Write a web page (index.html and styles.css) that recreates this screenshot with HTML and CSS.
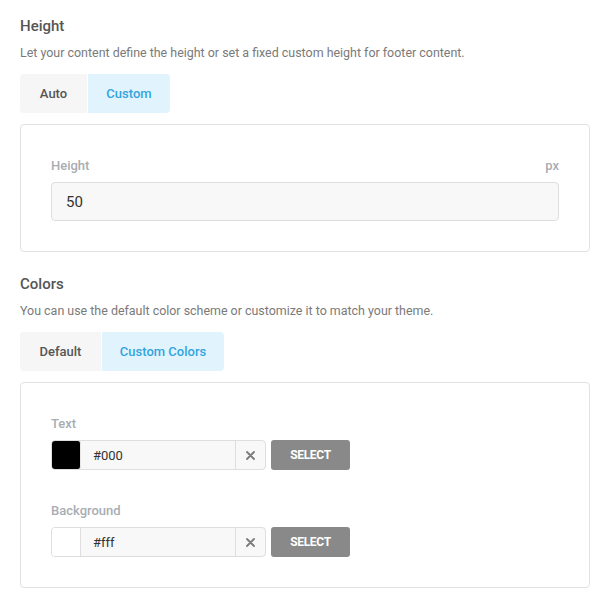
FILE: index.html
```html
<!DOCTYPE html>
<html>
<head>
<meta charset="utf-8">
<link rel="stylesheet" href="styles.css">
</head>
<body>
<div class="page">
  <section class="section">
    <h2 class="title">Height</h2>
    <p class="desc">Let your content define the height or set a fixed custom height for footer content.</p>
    <div class="tabs">
      <div class="tab tab-auto">Auto</div>
      <div class="tab tab-active tab-custom">Custom</div>
    </div>
    <div class="panel">
      <div class="field-head">
        <span class="label">Height</span>
        <span class="label unit">px</span>
      </div>
      <div class="text-input">50</div>
    </div>
  </section>

  <section class="section section-colors">
    <h2 class="title">Colors</h2>
    <p class="desc">You can use the default color scheme or customize it to match your theme.</p>
    <div class="tabs">
      <div class="tab tab-default">Default</div>
      <div class="tab tab-active tab-customcolors">Custom Colors</div>
    </div>
    <div class="panel">
      <div class="color-field">
        <div class="label">Text</div>
        <div class="color-row">
          <div class="color-group">
            <div class="swatch swatch-black"></div>
            <div class="hex">#000</div>
            <div class="clear">
              <svg width="9" height="9" viewBox="0 0 9 9"><path d="M1 1L8 8M8 1L1 8" stroke="#7b7b7b" stroke-width="1.8" stroke-linecap="round"/></svg>
            </div>
          </div>
          <div class="select-btn">SELECT</div>
        </div>
      </div>
      <div class="color-field">
        <div class="label">Background</div>
        <div class="color-row">
          <div class="color-group">
            <div class="swatch swatch-white"></div>
            <div class="hex">#fff</div>
            <div class="clear">
              <svg width="9" height="9" viewBox="0 0 9 9"><path d="M1 1L8 8M8 1L1 8" stroke="#7b7b7b" stroke-width="1.8" stroke-linecap="round"/></svg>
            </div>
          </div>
          <div class="select-btn">SELECT</div>
        </div>
      </div>
    </div>
  </section>
</div>
</body>
</html>
```

FILE: styles.css
```css
html, body {
  margin: 0;
  padding: 0;
  background: #ffffff;
}
body {
  font-family: Roboto, "Liberation Sans", Arial, sans-serif;
  color: #555;
}
.page {
  width: 570px;
  padding: 16px 0 0 20px;
}
.section-colors {
  margin-top: 22px;
}
.title {
  margin: 0;
  font-size: 15px;
  line-height: 20px;
  font-weight: 500;
  color: #555;
}
.desc {
  margin: 8px 0 0;
  font-size: 12.45px;
  line-height: 18px;
  color: #7a7a7a;
}
.tabs {
  display: flex;
  margin-top: 12px;
  height: 39px;
}
.tab {
  display: flex;
  align-items: center;
  justify-content: center;
  font-size: 13px;
  font-weight: 500;
  color: #555;
  background: #f6f6f6;
}
.tab:first-child {
  border-radius: 4px 0 0 4px;
}
.tab:last-child {
  border-radius: 0 4px 4px 0;
  border-left: 1px solid #fff;
}
.tab-active {
  background: #e1f4fd;
  color: #33a4de;
}
.tab-auto { width: 67px; }
.tab-custom { width: 82px; }
.tab-default { width: 81px; }
.tab-customcolors { width: 122px; }
.panel {
  margin-top: 11px;
  border: 1px solid #e2e2e2;
  border-radius: 4px;
  padding: 33px 30px 30px;
}
.field-head {
  display: flex;
  justify-content: space-between;
}
.label {
  font-size: 13px;
  line-height: 16px;
  font-weight: 500;
  color: #a8adb3;
}
.text-input {
  margin-top: 8px;
  height: 37px;
  border: 1px solid #dedede;
  border-radius: 4px;
  background: #f8f8f8;
  padding-left: 14px;
  display: flex;
  align-items: center;
  font-size: 15px;
  color: #333;
}
.color-field + .color-field {
  margin-top: 33px;
}
.color-row {
  display: flex;
  margin-top: 8px;
  height: 30px;
  gap: 5px;
}
.color-group {
  display: flex;
  width: 213px;
  height: 28px;
  border: 1px solid #dedede;
  border-radius: 4px;
  background: #f8f8f8;
}
.swatch {
  width: 28px;
  height: 28px;
  border-right: 1px solid #dedede;
  border-radius: 3px 0 0 3px;
  flex: none;
}
.swatch-black {
  background: #000;
  border-radius: 3px;
  border-right-color: #e6e6e6;
}
.swatch-white {
  background: #fff;
}
.hex {
  flex: 1;
  display: flex;
  align-items: center;
  padding-left: 12px;
  font-size: 13px;
  color: #333;
}
.clear {
  width: 29px;
  border-left: 1px solid #dedede;
  display: flex;
  align-items: center;
  justify-content: center;
}
.select-btn {
  width: 79px;
  height: 30px;
  background: #898989;
  border-radius: 3px;
  color: #fff;
  font-size: 12px;
  font-weight: 700;
  letter-spacing: -0.3px;
  display: flex;
  align-items: center;
  justify-content: center;
}
```
